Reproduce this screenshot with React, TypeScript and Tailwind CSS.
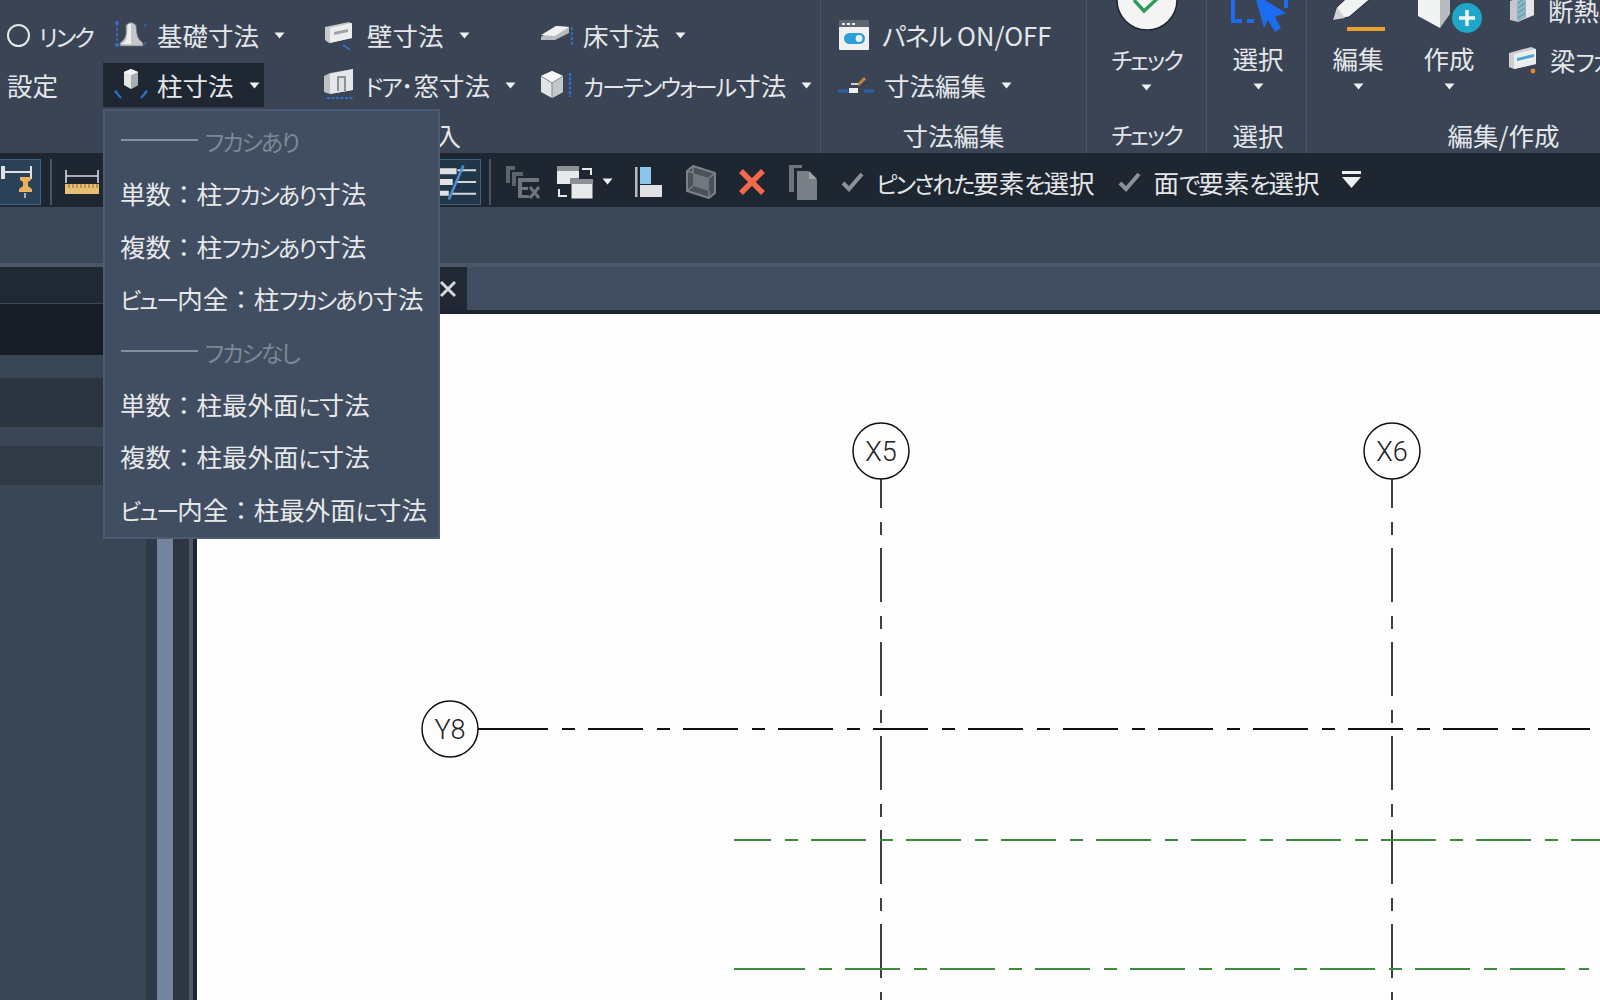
import React from 'react';

// kana are smaller and tighter than the kanji in this UI font, the full width colon stays full width
const Jp = ({ text }: { text: string }) => (
  <>
    {text.split(/([ぁ-んァ-ヶー]+|：)/).map((part, i) => {
      if (part === '：') {
        return (
          <span key={i} className="[font-feature-settings:normal]">
            {part}
          </span>
        );
      }
      return i % 2 ? (
        <span key={i} className="text-[23px] tracking-[-2px]">
          {part}
        </span>
      ) : (
        part
      );
    })}
  </>
);

const Caret = ({ className = '' }: { className?: string }) => (
  <svg width="11" height="7" viewBox="0 0 11 7" className={className}>
    <path d="M0.5 0.5H10.5L5.5 6.5Z" fill="#eef0f2" />
  </svg>
);

const Blue = '#2f6fd0';

// ribbon icons
const FoundationIcon = () => (
  <svg width="34" height="34" viewBox="0 0 34 34">
    <path d="M13 7q5-5 10 0l1 9q1 6 6 9v3H7v-3q5-3 6-9z" fill="#c4c6c8" stroke="#6b7077" strokeWidth="0.8" />
    <path d="M15 6h3v20H9q5-3 5-9z" fill="#eceded" />
    <path d="M4 5v22" stroke={Blue} strokeWidth="1.6" strokeDasharray="3 2" />
    <circle cx="4" cy="5" r="2" fill={Blue} />
    <circle cx="4" cy="27" r="2" fill={Blue} />
    <path d="M32 6v3M32 24v3" stroke={Blue} strokeWidth="1.2" />
  </svg>
);
const ColumnIcon = () => (
  <svg width="36" height="36" viewBox="0 0 36 36">
    <path d="M18 2l7 3v13l-7 4-7-4V5z" fill="#e4e5e6" />
    <path d="M18 8l7-3v13l-7 4z" fill="#a9acb0" />
    <path d="M11 5l7-3 7 3-7 3z" fill="#f6f6f6" />
    <path d="M2 24l6 7M34 24l-6 7" stroke={Blue} strokeWidth="2" />
    <circle cx="3" cy="25" r="1.4" fill={Blue} />
    <circle cx="33" cy="25" r="1.4" fill={Blue} />
  </svg>
);
const WallIcon = () => (
  <svg width="32" height="34" viewBox="0 0 32 34">
    <path d="M2 9l24-5 3 2v14L6 25l-4-3z" fill="#c6c8ca" />
    <path d="M7 10l22-5v15L7 25z" fill="#eceded" />
    <path d="M11 14l14-3v3l-14 3z" fill="#9ea2a6" />
    <path d="M20 27l7 5" stroke={Blue} strokeWidth="2" />
  </svg>
);
const DoorIcon = () => (
  <svg width="32" height="36" viewBox="0 0 32 36">
    <path d="M1 9l6-3 23-4v21L7 27l-6-2z" fill="#bfc2c4" />
    <path d="M7 7l23-5v21L7 27z" fill="#e6e7e8" />
    <path d="M14 9h9v15h-9z" fill="#8e9296" />
    <path d="M16 11h5v13h-5z" fill="#dfe0e1" />
    <path d="M4 31h26" stroke={Blue} strokeWidth="2" strokeDasharray="3 1.5" />
  </svg>
);
const FloorIcon = () => (
  <svg width="34" height="30" viewBox="0 0 34 30">
    <path d="M1 17L16 6l13 1v6L15 20H1z" fill="#b9bcbf" />
    <path d="M1 15L16 6l13 1-14 9z" fill="#f0f0f0" />
    <path d="M32 7v20" stroke={Blue} strokeWidth="2" strokeDasharray="3 2" />
  </svg>
);
const CurtainIcon = () => (
  <svg width="34" height="30" viewBox="0 0 34 30">
    <path d="M12 1l11 5v16l-11 6-11-6V6z" fill="#e3e4e5" />
    <path d="M12 13l11-7v16l-11 6z" fill="#c4c6c8" />
    <path d="M12 13L1 6l11-5 11 5z" fill="#f5f5f5" />
    <path d="M12 13v15M12 13L1 6M12 13l11-7" stroke="#7f858b" strokeWidth="1" />
    <path d="M30 3v24" stroke={Blue} strokeWidth="2.4" strokeDasharray="3 1.5" />
  </svg>
);
const PanelIcon = () => (
  <svg width="32" height="34" viewBox="0 0 32 34">
    <rect x="1" y="2" width="30" height="30" rx="1" fill="#eff0f0" />
    <rect x="1" y="2" width="30" height="7" fill="#5d6570" />
    <path d="M4 5h3v2H4zM9 5h3v2H9zM14 5h3v2h-3z" fill="#eff0f0" />
    <rect x="6" y="15" width="21" height="11" rx="5.5" fill="#2a9fd8" />
    <circle cx="21" cy="20.5" r="3.4" fill="#eff0f0" />
  </svg>
);
const DimEditIcon = () => (
  <svg width="36" height="26" viewBox="0 0 36 26">
    <path d="M0 19h10M26 19h10" stroke="#2c5fa8" strokeWidth="3" />
    <rect x="11" y="16" width="9" height="5" fill="#eceded" />
    <path d="M20 13l7-7" stroke="#c9843a" strokeWidth="3" />
    <path d="M13 12h7" stroke="#cfd1d3" strokeWidth="2" />
  </svg>
);

const CheckBigIcon = () => (
  <svg width="64" height="34" viewBox="0 0 64 34">
    <circle cx="32" cy="0" r="30" fill="#f3f4f3" stroke="#20262d" strokeWidth="1.5" />
    <path d="M19 0l10 11L44 -3" fill="none" stroke="#2f9a5c" strokeWidth="3.4" />
  </svg>
);
const SelectBigIcon = () => (
  <svg width="60" height="34" viewBox="0 0 60 34">
    <path d="M5 0v21h9M19 21h7" fill="none" stroke="#1c6cf0" strokeWidth="4" />
    <path d="M27 -4L36 28 40 20 47 32 53 28 47 17 58 13 30 -4z" fill="#1c6cf0" />
    <path d="M58 0v8" stroke="#1c6cf0" strokeWidth="4" />
  </svg>
);
const EditBigIcon = () => (
  <svg width="62" height="34" viewBox="0 0 62 34">
    <path d="M6 20L10 7 26 -8 42 0 22 17z" fill="#f1f2f2" stroke="#20262d" strokeWidth="1" />
    <path d="M10 7L6 20l12-2z" fill="#d0d2d4" />
    <path d="M20 29h38" stroke="#eca02e" strokeWidth="4" />
  </svg>
);
const CreateBigIcon = () => (
  <svg width="66" height="34" viewBox="0 0 66 34">
    <path d="M2 -10h28v24L24 28 2 16z" fill="#f2f3f3" />
    <path d="M24 -6h10v20L24 28z" fill="#b9bcbf" />
    <circle cx="51" cy="18" r="15" fill="#1fa6c8" />
    <path d="M51 10v16M43 18h16" stroke="#f2f6f7" strokeWidth="3.4" />
  </svg>
);
const InsulationIcon = () => (
  <svg width="28" height="30" viewBox="0 0 28 30">
    <path d="M2 6l16-6 8 0v20l-16 7-8-2z" fill="#c5c8ca" />
    <path d="M9 6l9-6v22l-9 5z" fill="#8fb6c8" />
    <path d="M10 8l7-5M10 13l7-5M10 18l7-5M10 23l7-5" stroke="#5f8aa0" strokeWidth="1" />
    <path d="M18 2h8v18l-8 3z" fill="#e4e5e6" />
  </svg>
);
const BeamIcon = () => (
  <svg width="30" height="30" viewBox="0 0 30 30">
    <path d="M1 8l22-6 5 2v15L6 24l-5-2z" fill="#cdd0d2" />
    <path d="M6 9l22-5v15L6 24z" fill="#eceded" />
    <path d="M9 13l17-4v3L9 16z" fill="#4aa5d6" />
    <circle cx="25" cy="26" r="2.4" fill="#e58a2b" />
  </svg>
);

// toolbar icons
const DimPinIcon = () => (
  <svg width="34" height="40" viewBox="0 0 34 40">
    <path d="M0 10h30M30 4v13" stroke="#dfe1e3" strokeWidth="2" />
    <rect x="0" y="4" width="4" height="13" fill="#dfe1e3" />
    <path d="M19 15h11v3l-3 2v4l4 3v3H18v-3l4-3v-4l-3-2z" fill="#e9b25e" />
    <path d="M24 31v5" stroke="#cfd2d4" strokeWidth="1.5" />
  </svg>
);
const RulerIcon = () => (
  <svg width="34" height="26" viewBox="0 0 34 26">
    <path d="M1 1v13M33 1v13M1 7h32" stroke="#d7d9db" strokeWidth="1.6" />
    <rect x="0" y="15" width="34" height="10" fill="#e9bf74" />
    <path d="M4 15v4M8 15v4M12 15v4M16 15v4M20 15v4M24 15v4M28 15v4M32 15v4" stroke="#8b6a2f" strokeWidth="1" />
  </svg>
);
const LinesIcon = () => (
  <svg width="41" height="40" viewBox="0 0 41 40">
    <path d="M0 6h17v6H0zM0 17h13v6H0zM0 29h9v5H0z" fill="#dfe1e3" />
    <path d="M18 8h19M16 20h21M12 32h25" stroke="#d5d7d9" strokeWidth="2" />
    <path d="M24 3L9 38" stroke="#4f8fd2" strokeWidth="2.6" />
  </svg>
);
const ExIcon = () => (
  <svg width="36" height="36" viewBox="0 0 36 36">
    <path d="M1 2h9v4H5v13H1zM7 8h11v4h-7v10H7z" fill="#5b636c" />
    <path d="M13 14h21v4H13zM13 18h4v16h-4zM13 23h10v3H13zM13 31h11v3H13z" fill="#70767d" />
    <path d="M25 23l9 11M34 23l-9 11" stroke="#70767d" strokeWidth="3" />
  </svg>
);
const SwapIcon = () => (
  <svg width="36" height="36" viewBox="0 0 36 36">
    <rect x="0" y="2" width="22" height="18" fill="#e8e9ea" />
    <rect x="0" y="2" width="22" height="5" fill="#8d9196" />
    <rect x="14" y="15" width="22" height="20" fill="#e8e9ea" stroke="#1e2631" />
    <rect x="14" y="15" width="22" height="5" fill="#8d9196" />
    <path d="M25 5h9v6M2 25v7h8" fill="none" stroke="#e8e9ea" strokeWidth="2" />
  </svg>
);
const AlignIcon = () => (
  <svg width="28" height="32" viewBox="0 0 28 32">
    <rect x="0" y="1" width="2.5" height="30" fill="#b9bcbf" />
    <rect x="5" y="1" width="11" height="17" fill="#8cc6ee" />
    <rect x="5" y="19" width="22" height="12" fill="#dfe1e3" />
  </svg>
);
const BoxIcon = () => (
  <svg width="32" height="36" viewBox="0 0 32 36">
    <path d="M2 7l6-5 22 7v20l-6 5L2 27z" fill="#4b525a" stroke="#7b8187" strokeWidth="2" strokeLinejoin="round" />
    <path d="M8 9l16 5v13L8 22z" fill="#71777d" />
    <path d="M2 7l6 2M8 2v7M30 9l-6 5M24 34v-7M2 27l6-5" stroke="#7b8187" strokeWidth="1.5" />
  </svg>
);
const CrossIcon = () => (
  <svg width="28" height="28" viewBox="0 0 28 28">
    <path d="M3 3l22 22M25 3L3 25" stroke="#f2694e" strokeWidth="5.4" />
  </svg>
);
const CopyIcon = () => (
  <svg width="30" height="36" viewBox="0 0 30 36">
    <path d="M1 1h13v3H6v24H1z" fill="#6f757c" />
    <path d="M9 7h11l9 9v20H9z" fill="#7a8087" />
    <path d="M21 7l8 8h-8z" fill="#a2a6ab" />
  </svg>
);
const SmallCheck = () => (
  <svg width="23" height="20" viewBox="0 0 23 20">
    <path d="M2 11l6 6L21 2" fill="none" stroke="#8b9199" strokeWidth="4" />
  </svg>
);
const OverflowIcon = () => (
  <svg width="19" height="18" viewBox="0 0 19 18">
    <rect x="0" y="0" width="19" height="3" fill="#eef0f2" />
    <path d="M0 6h19l-9.5 11z" fill="#eef0f2" />
  </svg>
);

const RibbonButton = ({
  icon,
  label,
  iconWidth,
  caret = true,
  active = false,
  className = '',
}: {
  icon: React.ReactNode;
  label: React.ReactNode;
  iconWidth: string;
  caret?: boolean;
  active?: boolean;
  className?: string;
}) => (
  <div className={`flex h-full items-center ${active ? 'w-[161px] bg-[#1f2733]' : ''} ${className}`}>
    <div className={`flex shrink-0 items-center ${iconWidth}`}>{icon}</div>
    <span className="whitespace-nowrap">{typeof label === 'string' ? <Jp text={label} /> : label}</span>
    {caret && <Caret className="ml-[15px] shrink-0" />}
  </div>
);

const GroupLabel = ({ text }: { text: string }) => (
  <div className="flex h-[35px] shrink-0 items-center justify-center whitespace-nowrap">
    <Jp text={text} />
  </div>
);

const BigButton = ({ icon, label, className = '' }: { icon: React.ReactNode; label: string; className?: string }) => (
  <div className={`flex flex-col items-center ${className}`}>
    <div className="flex h-[34px] items-start justify-center">{icon}</div>
    <div className="mt-[7px] leading-[34px]">
      <Jp text={label} />
    </div>
    <Caret className="mt-[8px]" />
  </div>
);

const Ribbon = () => (
  <div className="flex h-[153px] shrink-0 bg-[#3a4454]">
    <div className="flex w-[821px] shrink-0 flex-col border-r border-[#4a5566]">
      <div className="grid h-[117px] grid-cols-[103px_220px_217px_1fr] grid-rows-[46px_44px] gap-y-[5px] pt-[12px]">
        <div className="flex items-center pl-[7px]">
          <span className="mr-[9px] h-[23px] w-[23px] rounded-full border-2 border-[#e4e7ea]" />
          <span className="whitespace-nowrap">
            <Jp text="リンク" />
          </span>
        </div>
        <RibbonButton icon={<FoundationIcon />} label="基礎寸法" iconWidth="w-[44px]" className="pl-[10px]" />
        <RibbonButton icon={<WallIcon />} label="壁寸法" iconWidth="w-[44px]" />
        <RibbonButton icon={<FloorIcon />} label="床寸法" iconWidth="w-[43px]" />
        <div className="flex items-center pl-[7px]">設定</div>
        <RibbonButton icon={<ColumnIcon />} label="柱寸法" iconWidth="w-[44px]" active className="pl-[10px]" />
        <RibbonButton icon={<DoorIcon />} label="ドア･窓寸法" iconWidth="w-[42px]" />
        <RibbonButton icon={<CurtainIcon />} label="カーテンウォール寸法" iconWidth="w-[43px]" />
      </div>
      <GroupLabel text="寸法記入" />
    </div>

    <div className="flex w-[266px] shrink-0 flex-col border-r border-[#4a5566]">
      <div className="flex h-[117px] flex-col gap-y-[5px] pl-[17px] pt-[12px]">
        <div className="h-[46px]">
          <RibbonButton
            icon={<PanelIcon />}
            label={
              <>
                <span className="tracking-[-1px]">パネル</span> ON/OFF
              </>
            }
            iconWidth="w-[44px]"
            caret={false}
          />
        </div>
        <div className="h-[44px]">
          <RibbonButton icon={<DimEditIcon />} label="寸法編集" iconWidth="w-[46px]" />
        </div>
      </div>
      <GroupLabel text="寸法編集" />
    </div>

    <div className="flex w-[120px] shrink-0 flex-col border-r border-[#4a5566]">
      <BigButton icon={<CheckBigIcon />} label="チェック" className="h-[117px]" />
      <GroupLabel text="チェック" />
    </div>

    <div className="flex w-[100px] shrink-0 flex-col border-r border-[#4a5566] pl-[3px]">
      <BigButton icon={<SelectBigIcon />} label="選択" className="h-[117px]" />
      <GroupLabel text="選択" />
    </div>

    <div className="flex w-[393px] shrink-0 flex-col">
      <div className="flex h-[117px]">
        <BigButton icon={<EditBigIcon />} label="編集" className="w-[102px]" />
        <BigButton icon={<CreateBigIcon />} label="作成" className="w-[80px]" />
        <div className="ml-[19px] flex flex-col">
          <div className="-mt-[13px] flex h-[46px] items-center gap-[12px] whitespace-nowrap">
            <InsulationIcon />
            <span>断熱材</span>
          </div>
          <div className="mt-[4px] flex h-[46px] items-center gap-[12px] whitespace-nowrap">
            <BeamIcon />
            <span>
              <Jp text="梁フカシ寸法" />
            </span>
          </div>
        </div>
      </div>
      <GroupLabel text="編集/作成" />
    </div>
  </div>
);

const Toolbar = () => (
  <div className="flex h-[54px] shrink-0 items-center bg-[#1e2631] pt-[3px]">
    <div className="flex h-[46px] w-[41px] items-center justify-end border border-l-0 border-[#3d6488] bg-[#2b4158] pr-[5px]">
      <DimPinIcon />
    </div>
    <div className="ml-[9px] h-[46px] w-[2px] bg-[#4a5563]" />
    <div className="ml-[13px] w-[34px]">
      <RulerIcon />
    </div>
    <div className="ml-[341px] flex h-[46px] w-[41px] items-center border border-l-0 border-[#3d6488] bg-[#22364a]">
      <LinesIcon />
    </div>
    <div className="ml-[8px] h-[46px] w-[2px] bg-[#4a5563]" />
    <div className="ml-[14px]">
      <ExIcon />
    </div>
    <div className="ml-[16px]">
      <SwapIcon />
    </div>
    <Caret className="ml-[9px]" />
    <div className="ml-[22px]">
      <AlignIcon />
    </div>
    <div className="ml-[22px]">
      <BoxIcon />
    </div>
    <div className="ml-[21px]">
      <CrossIcon />
    </div>
    <div className="ml-[22px]">
      <CopyIcon />
    </div>
    <div className="ml-[23px]">
      <SmallCheck />
    </div>
    <span className="ml-[12px] whitespace-nowrap">
      <Jp text="ピンされた要素を選択" />
    </span>
    <div className="ml-[23px]">
      <SmallCheck />
    </div>
    <span className="ml-[13px] whitespace-nowrap">
      <Jp text="面で要素を選択" />
    </span>
    <div className="ml-[22px] -mt-[4px]">
      <OverflowIcon />
    </div>
  </div>
);

const LeftPanel = () => (
  <div className="flex w-[197px] shrink-0">
    <div className="flex w-[146px] flex-col bg-[#3a4656]">
      <div className="h-[36px] bg-[#1f2833]" />
      <div className="mt-[1px] h-[51px] bg-[#171d24]" />
      <div className="mt-[23px] h-[49px] bg-[#2b343f]" />
      <div className="mt-[19px] h-[39px] bg-[#303a46]" />
    </div>
    <div className="w-[11px] bg-[#2f3a48]" />
    <div className="w-[16px] bg-[#73849c]" />
    <div className="w-[16px] bg-[#2e3644]" />
    <div className="w-[4px] bg-[#4a5a6c]" />
    <div className="w-[4px] bg-[#1c2530]" />
  </div>
);

// the grid bubbles and lines of the plan, coordinates are in canvas space (x - 197, y - 314)
const Plan = () => {
  const x5 = 684;
  const x6 = 1195;
  return (
    <svg className="block h-[686px] w-[1403px]" viewBox="0 0 1403 686">
      {[x5, x6].map((x) => (
        <g key={x}>
          <line x1={x} y1="140" x2={x} y2="686" stroke="#111" strokeWidth="1.6" strokeDasharray="54 14 13 13" />
          <circle cx={x} cy="137" r="28" fill="#fdfdfd" stroke="#111" strokeWidth="1.5" />
          <text x={x} y="147" textAnchor="middle" fontFamily="Roboto, sans-serif" fontWeight="300" fontSize="27" fill="#222">
            {x === x5 ? 'X5' : 'X6'}
          </text>
        </g>
      ))}
      <line x1="281" y1="415" x2="296" y2="415" stroke="#111" strokeWidth="2" />
      <line x1="296" y1="415" x2="1393" y2="415" stroke="#111" strokeWidth="2" strokeDasharray="55 14 13 13" />
      <circle cx="253" cy="415" r="28" fill="#fdfdfd" stroke="#111" strokeWidth="1.5" />
      <text x="253" y="425" textAnchor="middle" fontFamily="Roboto, sans-serif" fontWeight="300" fontSize="27" fill="#222">
        Y8
      </text>
      <line x1="537" y1="526" x2="1403" y2="526" stroke="#3c8a3c" strokeWidth="2" strokeDasharray="55 14 13 13" strokeDashoffset="18" />
      <line x1="537" y1="655" x2="553" y2="655" stroke="#3c8a3c" strokeWidth="2" />
      <line x1="553" y1="655" x2="1392" y2="655" stroke="#3c8a3c" strokeWidth="2" strokeDasharray="55 14 13 13" />
    </svg>
  );
};

const Workspace = () => (
  <div className="flex min-h-0 flex-1 border-t-[4px] border-[#4b5666]">
    <LeftPanel />
    <div className="flex min-w-0 flex-1 flex-col">
      <div className="flex h-[43px] shrink-0 bg-[#414d60]">
        <div className="flex w-[270px] items-center justify-end bg-[#1f2833] pr-[10px]">
          <svg width="18" height="18" viewBox="0 0 18 18">
            <path d="M2 2l14 14M16 2L2 16" stroke="#d5d8dc" strokeWidth="3" />
          </svg>
        </div>
      </div>
      <div className="h-[4px] shrink-0 bg-[#1c2530]" />
      <div className="flex-1 overflow-hidden bg-[#fdfdfd]">
        <Plan />
      </div>
    </div>
  </div>
);

const MenuHeader = ({ label }: { label: string }) => (
  <div className="flex h-[52.7px] items-center pb-[2px] pl-[16px] text-[#7e8896]">
    <span className="mr-[7px] h-[2px] w-[77px] bg-[#868f9c]" />
    <span>
      <Jp text={label} />
    </span>
  </div>
);

const MenuItem = ({ label }: { label: string }) => (
  <div className="flex h-[52.7px] items-center whitespace-nowrap pl-[15px] pb-[2px] text-[#e6e8ea]">
    <span>
      <Jp text={label} />
    </span>
  </div>
);

const ColumnMenu = () => (
  <div className="absolute left-[103px] top-[109px] h-[430px] w-[337px] border-2 border-[#4d5b70] bg-[#414d60] pt-[4px]">
    <MenuHeader label="フカシあり" />
    <MenuItem label="単数：柱フカシあり寸法" />
    <MenuItem label="複数：柱フカシあり寸法" />
    <MenuItem label="ビュー内全：柱フカシあり寸法" />
    <MenuHeader label="フカシなし" />
    <MenuItem label="単数：柱最外面に寸法" />
    <MenuItem label="複数：柱最外面に寸法" />
    <MenuItem label="ビュー内全：柱最外面に寸法" />
  </div>
);

export default function App() {
  return (
    <div className="relative flex h-[1000px] w-[1600px] flex-col overflow-hidden bg-[#3a4656] font-['Noto_Sans_CJK_JP',sans-serif] text-[25.5px] leading-none text-[#e4e7ea] [font-feature-settings:'palt']">
      <Ribbon />
      <Toolbar />
      <div className="h-[56px] shrink-0 bg-[#3b4657]" />
      <Workspace />
      <ColumnMenu />
    </div>
  );
}
